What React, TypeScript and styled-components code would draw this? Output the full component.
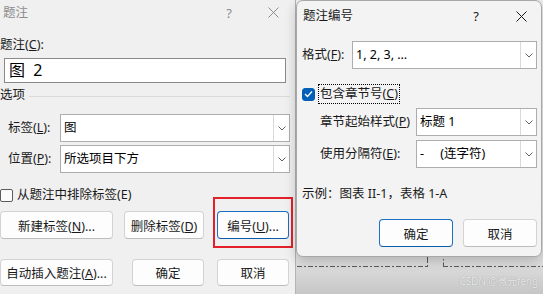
import React from "react";
import styled, { createGlobalStyle } from "styled-components";

const GlobalStyle = createGlobalStyle`
  html, body {
    margin: 0;
    padding: 0;
  }
  body {
    font-family: "Noto Sans", "Noto Sans CJK SC", sans-serif;
    font-size: 12.5px;
    color: #1a1a1a;
  }
`;

const Desktop = styled.div`
  position: relative;
  width: 543px;
  height: 294px;
  overflow: hidden;
  background: linear-gradient(180deg, #eeeeee 0, #e2e2e2 258px, #c6c6c6 294px);
`;

const Window = styled.section`
  position: absolute;
  top: 0;
  display: flex;
  flex-direction: column;
  box-sizing: border-box;
`;

const LeftWindow = styled(Window)`
  left: 0;
  width: 296px;
  height: 294px;
  background: #f0f0f0;
  border-right: 1px solid #b4b4b4;
`;

const RightWindow = styled(Window)`
  left: 296px;
  width: 246px;
  height: 257px;
  background: #f3f3f3;
  border: 1px solid #a8a8a8;
  border-radius: 7px;
  box-shadow: 0 4px 12px rgba(0, 0, 0, 0.22);
`;

const TitleBar = styled.header<{ $height: number; $padLeft: number }>`
  display: flex;
  align-items: center;
  flex-shrink: 0;
  height: ${(p) => p.$height}px;
  padding-left: ${(p) => p.$padLeft}px;
`;

const Title = styled.span<{ $active?: boolean }>`
  flex: 1;
  line-height: 16px;
  color: ${(p) => (p.$active ? "#1a1a1a" : "#8c8c8c")};
`;

const CaptionButton = styled.span<{ $width: number; $active?: boolean }>`
  width: ${(p) => p.$width}px;
  display: flex;
  align-items: center;
  justify-content: center;
  font-size: 13px;
  line-height: 16px;
  color: ${(p) => (p.$active ? "#1a1a1a" : "#8c8c8c")};
`;

const Body = styled.div<{ $padLeft: number; $padRight: number }>`
  display: flex;
  flex-direction: column;
  padding: 0 ${(p) => p.$padRight}px 0 ${(p) => p.$padLeft}px;
`;

const FieldLabel = styled.div`
  margin-top: 12px;
  line-height: 16px;
`;

const TextInput = styled.div`
  margin: 5px 4px 0;
  height: 25px;
  box-sizing: border-box;
  border: 1px solid #8a8a8a;
  background: #ffffff;
  padding-left: 4px;
  font-size: 16px;
  line-height: 23px;
  white-space: pre;
  color: #000;
`;

const GroupHeader = styled.div`
  margin-top: 4px;
  display: flex;
  align-items: center;
  gap: 4px;
  line-height: 16px;

  &::after {
    content: "";
    flex: 1;
    height: 1px;
    margin-top: 3px;
    background: #d9d9d9;
  }
`;

const SelectRow = styled.div<{ $top: number; $indent: number; $labelWidth: number }>`
  display: flex;
  align-items: center;
  margin-top: ${(p) => p.$top}px;
  padding-left: ${(p) => p.$indent}px;

  & > label {
    width: ${(p) => p.$labelWidth}px;
    flex-shrink: 0;
    line-height: 16px;
  }
`;

const Select = styled.div`
  flex: 1;
  display: flex;
  height: 28px;
  box-sizing: border-box;
  border: 1px solid #adadad;
  background: #ffffff;
`;

const SelectValue = styled.span`
  flex: 1;
  padding-left: 3px;
  line-height: 26px;
  white-space: pre;
  color: #000;
`;

const SelectArrow = styled.span`
  width: 16px;
  box-sizing: border-box;
  border-left: 1px solid #dadada;
  display: flex;
  align-items: center;
  justify-content: center;
`;

const CheckRow = styled.div<{ $top: number }>`
  display: flex;
  align-items: center;
  gap: 4px;
  margin-top: ${(p) => p.$top}px;
  line-height: 18px;
`;

const CheckBox = styled.span<{ $checked?: boolean }>`
  width: 13px;
  height: 13px;
  box-sizing: border-box;
  border-radius: ${(p) => (p.$checked ? 3 : 2)}px;
  border: 1px solid ${(p) => (p.$checked ? "#005fb8" : "#5c5c5c")};
  background: ${(p) => (p.$checked ? "#005fb8" : "#fbfbfb")};
  display: flex;
  align-items: center;
  justify-content: center;
`;

const FocusText = styled.span`
  outline: 1px dotted #000;
  outline-offset: 0;
  padding: 0 1px;
  line-height: 18px;
`;

const ButtonRow = styled.div<{ $top: number }>`
  display: flex;
  justify-content: space-between;
  margin-top: ${(p) => p.$top}px;
  width: 289px;
`;

const ButtonGroup = styled.div<{ $gap: number }>`
  display: flex;
  gap: ${(p) => p.$gap}px;
`;

const Button = styled.button<{ $width: number; $height?: number; $primary?: boolean }>`
  width: ${(p) => p.$width}px;
  height: ${(p) => p.$height ?? 28}px;
  box-sizing: border-box;
  padding: 0;
  font: inherit;
  color: #1a1a1a;
  background: #fdfdfd;
  border: 1px solid ${(p) => (p.$primary ? "#1b6fc4" : "#d3d3d3")};
  border-bottom-color: ${(p) => (p.$primary ? "#0c5aa8" : "#bdbdbd")};
  border-radius: 4px;
`;

const Highlight = styled.div`
  position: absolute;
  left: 213px;
  top: 197px;
  width: 80px;
  height: 51px;
  box-sizing: border-box;
  border: 2px solid #e3202b;
`;

const Example = styled.div`
  margin-top: 18px;
  line-height: 16px;
`;

const ActionRow = styled.div`
  display: flex;
  justify-content: flex-end;
  gap: 10px;
  margin-top: 17px;
`;

const DocMarks = styled.svg`
  position: absolute;
  left: 296px;
  top: 255px;
`;

const Watermark = styled.div`
  position: absolute;
  right: 5px;
  bottom: 7px;
  font-size: 10px;
  line-height: 12px;
  letter-spacing: -0.1px;
  color: rgba(255, 255, 255, 0.8);
  text-shadow: 0 0 1px rgba(0, 0, 0, 0.35);
`;

const Close = ({ color }: { color: string }) => (
  <svg width="11" height="11" viewBox="0 0 11 11">
    <path d="M0.5 0.5 L10.5 10.5 M10.5 0.5 L0.5 10.5" stroke={color} strokeWidth="1" fill="none" />
  </svg>
);

const Chevron = () => (
  <svg width="8" height="5" viewBox="0 0 8 5">
    <polyline points="0.5,0.5 4,4 7.5,0.5" stroke="#606060" strokeWidth="1" fill="none" />
  </svg>
);

const Check = () => (
  <svg width="9" height="8" viewBox="0 0 9 8">
    <polyline points="1,4 3.5,6.5 8,1.5" stroke="#ffffff" strokeWidth="1.3" fill="none" />
  </svg>
);

const Dropdown = ({ value }: { value: React.ReactNode }) => (
  <Select>
    <SelectValue>{value}</SelectValue>
    <SelectArrow>
      <Chevron />
    </SelectArrow>
  </Select>
);

export default function App() {
  return (
    <>
      <GlobalStyle />
      <Desktop>
        <DocMarks width="247" height="15">
          <g stroke="#5a5a5a" strokeWidth="1" fill="none">
            <path d="M1 11.5 H131" strokeDasharray="5 2 2 2" />
            <path d="M147 11.5 H247" strokeDasharray="5 2 2 2" />
            <path d="M131.5 2 V8 M131.5 10 V12" />
            <path d="M147.5 4 V5.5 M147.5 7.5 V12" />
          </g>
        </DocMarks>
        <Watermark>CSDN @微光feng</Watermark>

        <LeftWindow>
          <TitleBar $height={25} $padLeft={3}>
            <Title>题注</Title>
            <CaptionButton $width={44}>?</CaptionButton>
            <CaptionButton $width={44}>
              <Close color="#8c8c8c" />
            </CaptionButton>
          </TitleBar>
          <Body $padLeft={0} $padRight={5}>
            <FieldLabel>
              题注(<u>C</u>):
            </FieldLabel>
            <TextInput>图  2</TextInput>
            <GroupHeader>选项</GroupHeader>
            <SelectRow $top={11} $indent={8} $labelWidth={52}>
              <label>
                标签(<u>L</u>):
              </label>
              <Dropdown value="图" />
            </SelectRow>
            <SelectRow $top={3} $indent={8} $labelWidth={52}>
              <label>
                位置(<u>P</u>):
              </label>
              <Dropdown value="所选项目下方" />
            </SelectRow>
            <CheckRow $top={13}>
              <CheckBox />
              <span>从题注中排除标签(E)</span>
            </CheckRow>
            <ButtonRow $top={7}>
              <Button $width={113}>
                新建标签(<u>N</u>)...
              </Button>
              <ButtonGroup $gap={13}>
                <Button $width={80}>
                  删除标签(<u>D</u>)
                </Button>
                <Button $width={72} $primary>
                  编号(<u>U</u>)...
                </Button>
              </ButtonGroup>
            </ButtonRow>
            <ButtonRow $top={20}>
              <Button $width={113} $height={27}>
                自动插入题注(<u>A</u>)...
              </Button>
              <ButtonGroup $gap={13}>
                <Button $width={72} $height={27}>
                  确定
                </Button>
                <Button $width={72} $height={27}>
                  取消
                </Button>
              </ButtonGroup>
            </ButtonRow>
          </Body>
          <Highlight />
        </LeftWindow>

        <RightWindow>
          <TitleBar $height={30} $padLeft={6}>
            <Title $active>题注编号</Title>
            <CaptionButton $width={50} $active>
              ?
            </CaptionButton>
            <CaptionButton $width={40} $active>
              <Close color="#1a1a1a" />
            </CaptionButton>
          </TitleBar>
          <Body $padLeft={5} $padRight={4}>
            <SelectRow $top={10} $indent={0} $labelWidth={50}>
              <label>
                格式(<u>F</u>):
              </label>
              <Dropdown value="1, 2, 3, …" />
            </SelectRow>
            <CheckRow $top={16}>
              <CheckBox $checked>
                <Check />
              </CheckBox>
              <FocusText>
                包含章节号(<u>C</u>)
              </FocusText>
            </CheckRow>
            <SelectRow $top={5} $indent={18} $labelWidth={96}>
              <label>
                章节起始样式(<u>P</u>)
              </label>
              <Dropdown value="标题 1" />
            </SelectRow>
            <SelectRow $top={4} $indent={18} $labelWidth={96}>
              <label>
                使用分隔符(<u>E</u>):
              </label>
              <Dropdown value={"-     (连字符)"} />
            </SelectRow>
            <Example>示例：图表 II-1，表格 1-A</Example>
            <ActionRow>
              <Button $width={74} $primary>
                确定
              </Button>
              <Button $width={74}>取消</Button>
            </ActionRow>
          </Body>
        </RightWindow>
      </Desktop>
    </>
  );
}
